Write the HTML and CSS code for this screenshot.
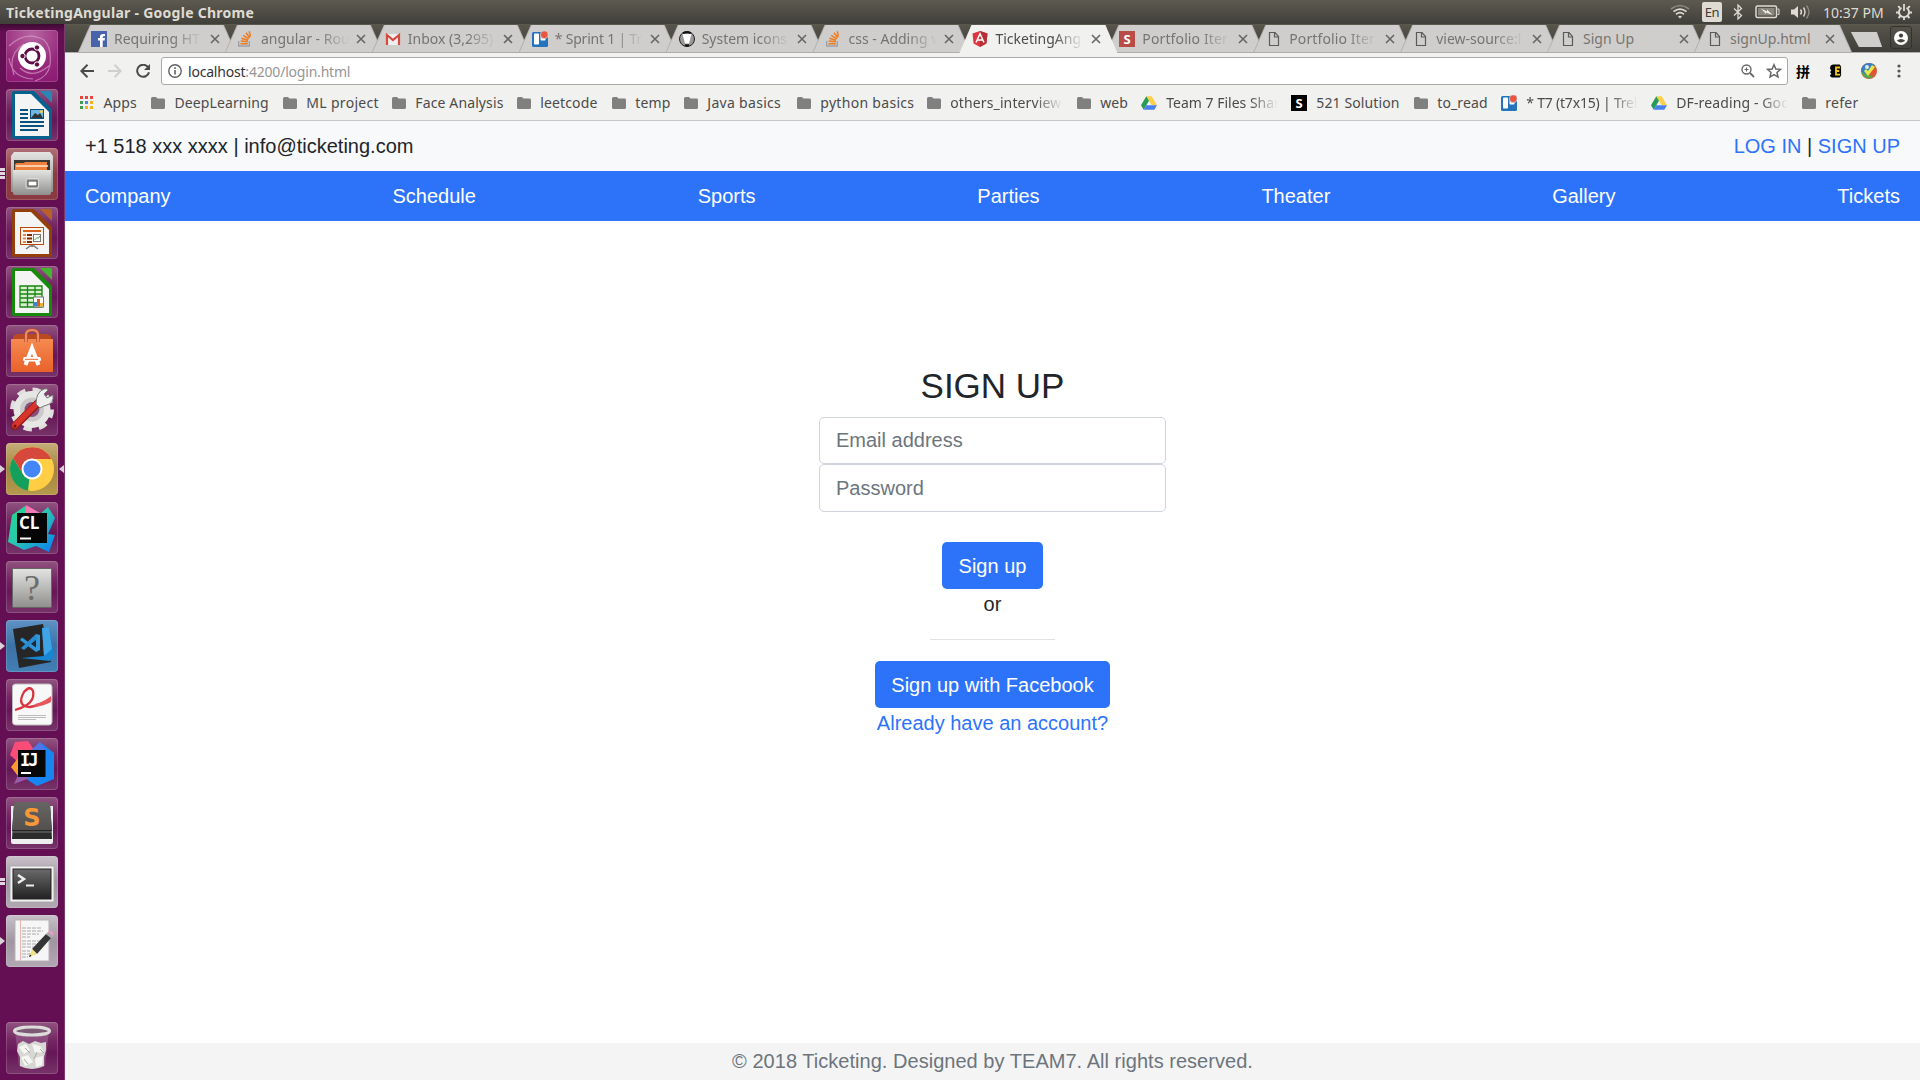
FILE: index.html
```html
<!DOCTYPE html>
<html lang="en">
<head>
<meta charset="utf-8">
<title>TicketingAngular</title>
<link rel="stylesheet" href="styles.css">
</head>
<body>
<svg class="defs" width="0" height="0">
  <defs>
    <linearGradient id="silver" x2="0" y2="1"><stop stop-color="#e4e4e2"/><stop offset="1" stop-color="#8f8f8d"/></linearGradient>
    <linearGradient id="orange" x2="0" y2="1"><stop stop-color="#f58a50"/><stop offset="1" stop-color="#e8622a"/></linearGradient>
    <linearGradient id="dark" x2="0" y2="1"><stop stop-color="#6a6a6a"/><stop offset="1" stop-color="#222"/></linearGradient>
    <linearGradient id="teal" x2="1" y2="1"><stop stop-color="#21d789"/><stop offset=".45" stop-color="#2bc6ae"/><stop offset="1" stop-color="#087cfa"/></linearGradient>
    <symbol id="folder" viewBox="0 0 14 12"><path d="M0 1.5Q0 0 1.5 0H5L6.5 1.6H12.5Q14 1.6 14 3V10.5Q14 12 12.5 12H1.5Q0 12 0 10.5Z" fill="#808080"/></symbol>
    <symbol id="page" viewBox="0 0 16 16"><path d="M3.5 1.5H9L12.500 5.500V14.500H3.500Z" fill="none" stroke="#5a5a5a" stroke-width="1.200"/><path d="M8.500 1.500V6H12.500" fill="none" stroke="#5a5a5a" stroke-width="1.200"/></symbol>
    <symbol id="stack" viewBox="0 0 16 16"><path d="M.7 10V15H11.300V10" fill="none" stroke="#9aa0a6" stroke-width="1.300"/><path d="M2.500 12.700H9.800M2.700 10L9.800 10.800M3.400 7.200L10 9.300M5.200 4.300L10.800 7.800M8 1.800L11.800 6.700M11.200 .2L12.500 5.500" stroke="#ef7a1c" stroke-width="1.500"/></symbol>
    <symbol id="trello" viewBox="0 0 16 16"><rect y="1" width="16" height="15" rx="1.500" fill="#2374bd"/><rect x="2" y="2.500" width="5" height="11" rx=".8" fill="#fff"/><rect x="8.500" y="2.500" width="5" height="7" rx=".8" fill="#fff"/><circle cx="12.300" cy="3.700" r="3.900" fill="#e8563f" stroke="#d5cdc8" stroke-width=".8"/></symbol>
    <symbol id="drive" viewBox="0 0 16 16"><path d="M5.300 1.300H10.700L16 10.200H10.600Z" fill="#ffcf48"/><path d="M5.300 1.300L8 5.800L2.700 14.700L0 10.200Z" fill="#2a9b57"/><path d="M5.300 10.200H16L13.300 14.700H2.700Z" fill="#4a80ee"/></symbol>
    <symbol id="angular" viewBox="0 0 16 16"><path d="M8 0L15.500 2.600L14.400 12.400L8 16L1.600 12.400L.5 2.600Z" fill="#dd3540"/><path d="M8 0L15.500 2.600L14.400 12.400L8 16Z" fill="#b52e38"/><path d="M4 11.500L8 2.800L12 11.500M5.500 9H10.500" fill="none" stroke="#fff" stroke-width="1.500"/></symbol>
    <symbol id="close" viewBox="0 0 10 10"><path d="M1 1L9 9M9 1L1 9" stroke="#666" stroke-width="1.600"/></symbol>
  </defs>
</svg>

<header class="panel">
  <span class="panel-title">TicketingAngular - Google Chrome</span>
  <div class="indicators">
    <svg class="i-wifi" width="20" height="16" viewBox="0 0 20 16" fill="none" stroke-width="1.600"><path d="M1 5Q10-2 19 5" stroke="#8c897f"/><path d="M3.500 7.700Q10 2.500 16.500 7.700M6 10.300Q10 7 14 10.300" stroke="#dfdbd2"/><path d="M8 12.500Q10 11 12 12.500L10 14.500Z" fill="#dfdbd2" stroke="none"/></svg>
    <span class="lang">En</span>
    <svg class="i-bt" width="10" height="16" viewBox="0 0 10 16" fill="none" stroke="#dfdbd2" stroke-width="1.300"><path d="M1 4.500L8.500 11.500L5 15V1L8.500 4.500L1 11.500"/></svg>
    <svg class="i-bat" width="25" height="14" viewBox="0 0 25 14"><rect x="1" y="1" width="20.500" height="11.500" rx="1.500" fill="none" stroke="#dfdbd2" stroke-width="1.500"/><rect x="3" y="3" width="16.500" height="7.500" fill="#8a877f"/><path d="M22.500 4H24V9.500H22.500" stroke="#dfdbd2" fill="none"/><path d="M6 3.500L12 6.500V4.500L17.500 10L11 7.500V9Z" fill="#f1eee6"/></svg>
    <svg class="i-vol" width="20" height="14" viewBox="0 0 20 14" fill="none" stroke-width="1.400"><path d="M0 4.500H3L7 1V13L3 9.500H0Z" fill="#dfdbd2"/><path d="M9.500 4.500Q11.500 7 9.500 9.500M12.500 2.500Q15.500 7 12.500 11.500" stroke="#dfdbd2"/><path d="M15.500.5Q20.500 7 15.500 13.500" stroke="#8c897f"/></svg>
    <span class="clock">10:37 PM</span>
    <svg class="i-gear" width="16" height="16" viewBox="0 0 16 16" fill="none" stroke="#dfdbd2"><path d="M5.500 3.800A5 5 0 1 0 10.500 3.800" stroke-width="1.900"/><path d="M8 0V7" stroke-width="1.800"/><path d="M2.200 2.200L4 4M13.800 2.200L12 4M0 8.500H3M13 8.500H16M2.500 14L4.500 12M13.500 14L11.500 12M8 13.500V16" stroke-width="1.900"/></svg>
  </div>
</header>

<div class="desktop">
<aside class="launcher">
  <div class="tile ubuntu"><svg viewBox="0 0 52 52"><path d="M3 16Q20 0 38 10Q46 18 44 35Q42 47 29 51M8 45Q1 24 18 14M14 38Q27 50 44 35M3 28Q6 48 27 49" fill="none" stroke="#d59bc4" stroke-width="1.200" opacity=".7"/><circle cx="26" cy="26" r="14" fill="#fff"/><circle cx="26" cy="26" r="7" fill="none" stroke="#5e0d49" stroke-width="2.800"/><g fill="#5e0d49" stroke="#fff" stroke-width="1"><circle cx="16.500" cy="26" r="2.700"/><circle cx="31" cy="17.500" r="2.700"/><circle cx="31" cy="34.500" r="2.700"/></g></svg></div>

  <div class="tile"><svg viewBox="0 0 52 52"><path d="M8 2H28L46 20V48Q46 50 44 50H8Q6 50 6 48V4Q6 2 8 2Z" fill="#07618f"/><path d="M9 5H25L43 23V47H9Z" fill="#f4f4f4"/><path d="M34 2H44Q46 2 46 4V14Z" fill="#2a86b5"/><path d="M14 21H22M14 25H22M14 29H22M14 33H38M14 37H38M14 41H32" stroke="#07527e" stroke-width="2"/><rect x="24.500" y="20.500" width="13" height="9" fill="#6fb7df" stroke="#07527e"/><path d="M25 29L29 24L32 26L34 24L37 29Z" fill="#2e3436"/><circle cx="35.500" cy="22.500" r="1.500" fill="#f5d23c"/></svg></div>

  <div class="tile files"><i class="dots"></i><svg viewBox="0 0 52 52"><path d="M8 4H44L47 8V44H5V8Z" fill="url(#silver)"/><rect x="8" y="12" width="36" height="10" fill="#3b3732"/><path d="M9 16L11 15H18L19 14H41V22H9Z" fill="#ef7f3c"/><path d="M10 18H42" stroke="#ffe9cf" stroke-width="1.500"/><path d="M7 22H45V45Q45 47 43 47H9Q7 47 7 45Z" fill="url(#silver)"/><rect x="20" y="30.500" width="12.500" height="10" rx="1.500" fill="#aaa" stroke="#d9d9d9"/><rect x="22" y="33" width="9" height="5" fill="#fff" stroke="#444"/></svg></div>

  <div class="tile"><svg viewBox="0 0 52 52"><path d="M8 2H28L46 20V48Q46 50 44 50H8Q6 50 6 48V4Q6 2 8 2Z" fill="#933f0b"/><path d="M9 5H25L43 23V47H9Z" fill="#f4f4f4"/><path d="M34 2H44Q46 2 46 4V14Z" fill="#b8602a"/><rect x="14.500" y="20.500" width="23" height="17" fill="#fff5ee" stroke="#b9490f"/><path d="M17 24H35" stroke="#d4641c" stroke-width="2"/><path d="M17 28H20M17 31.500H20M17 35H20" stroke="#e08b4b" stroke-width="2"/><path d="M21 28H26M21 31.500H26M21 35H26" stroke="#7c2d06" stroke-width="2"/><rect x="27.500" y="27.500" width="7" height="7" fill="#fff" stroke="#777"/><path d="M28.500 33L31 30.500L32 31.500L34 29" stroke="#3a3" fill="none"/><path d="M26 38V40M20 42L24 39H28L32 42" fill="none" stroke="#777" stroke-width="1.500"/></svg></div>

  <div class="tile"><svg viewBox="0 0 52 52"><path d="M8 2H28L46 20V48Q46 50 44 50H8Q6 50 6 48V4Q6 2 8 2Z" fill="#188a0b"/><path d="M9 5H25L43 23V47H9Z" fill="#f4f4f4"/><path d="M34 2H44Q46 2 46 4V14Z" fill="#43b52e"/><path d="M14 20H36V41H14ZM14 24H36M14 28H36M14 32H36M14 36.500H36M21.500 20V41M29 20V41" fill="#d9f0d3" stroke="#18850e" stroke-width="1.300"/><rect x="27.500" y="31" width="10" height="10" fill="#fff" stroke="#777"/><path d="M28 36H31V40.500H28Z" fill="#3b86c8"/><path d="M31 33H34V40.500H31Z" fill="#df5a1b"/><path d="M34 37H37V40.500H34Z" fill="#e9b52d"/></svg></div>

  <div class="tile"><svg viewBox="0 0 52 52"><path d="M7 11L11 9H41L45 11V14H7Z" fill="#b94a20"/><path d="M5 14H47V47H5Z" fill="url(#orange)"/><path d="M20 17V10Q20 5 26 5Q32 5 32 10V17" fill="none" stroke="#b9532f" stroke-width="3.500"/><path d="M20 17V10Q20 5 26 5Q32 5 32 10V17" fill="none" stroke="#ec8b66" stroke-width="2"/><path d="M19.500 40L26 23L32.500 40" fill="none" stroke="#fff" stroke-width="4"/><rect x="17" y="32" width="18" height="4.500" rx="2" fill="#fff"/><path d="M19 34.300H32" stroke="#e76a32" stroke-width="1"/></svg></div>

  <div class="tile"><svg viewBox="0 0 52 52"><circle cx="26" cy="25.500" r="19.500" fill="none" stroke="#dededc" stroke-width="5" stroke-dasharray="8.200 7.110"/><circle cx="26" cy="25.500" r="13.500" fill="none" stroke="#e6e6e4" stroke-width="10"/><circle cx="26" cy="25.500" r="12" fill="#cbc9ca"/><circle cx="26" cy="25.500" r="7.500" fill="#87517d"/><path d="M9 42L32 19" stroke="#8f1b16" stroke-width="8" stroke-linecap="round"/><path d="M9 41.500L31 19.500" stroke="#d8342c" stroke-width="6" stroke-linecap="round"/><path d="M30 20Q30 8 38 5Q42 4 42 6L38 10L41 14L47 11Q48 19 41 21Q37 22 34 24Z" fill="#eee" stroke="#777" stroke-width="1"/><circle cx="9" cy="42" r="1.500" fill="#6d1610"/></svg></div>

  <div class="tile chrome"><i class="arrow"></i><i class="arrow-right"></i><svg viewBox="0 0 52 52"><circle cx="26" cy="26" r="22" fill="#ffce44"/><path d="M7 15L17 31L26 36L24 48A22 22 0 0 1 7 15Z" fill="#14a05a"/><path d="M26 48L35 31H24L22 47.500Z" fill="#ffce44"/><path d="M17 31L7 15A22 22 0 0 1 45.500 16H26Z" fill="#d6483c"/><circle cx="26" cy="26" r="10.500" fill="#fff"/><circle cx="26" cy="26" r="8.500" fill="#4486f5"/></svg></div>

  <div class="tile"><svg viewBox="0 0 52 52"><path d="M2 40L6 13L19 4L34 12L42 5L49 16L42 32L49 33L43 50L30 44L18 48Z" fill="url(#teal)"/><path d="M20 3L34 11L32 15H19Z" fill="#f779b4"/><rect x="11" y="11" width="30" height="30" fill="#050505"/><text x="13" y="27" class="brand">CL</text><path d="M14 36.500H25" stroke="#fff" stroke-width="2"/></svg></div>

  <div class="tile"><svg viewBox="0 0 52 52"><rect x="6.500" y="7.500" width="39" height="39" rx="1" fill="url(#silver)" stroke="#666"/><text x="26" y="39" text-anchor="middle" class="question">?</text></svg></div>

  <div class="tile vscode"><i class="arrow"></i><svg viewBox="0 0 52 52"><path d="M7 9L37 4L45 42L13 48Z" fill="#262626"/><path d="M36 8L43 7L48 36L44 41L15 38L38 36Z" fill="#1685d2"/><path d="M36 8L43 7L46 29L38 36Z" fill="#3fa4e6"/><path d="M30 14L34 15V30L30 32L14 20L16 17.500L30 27.500Z" fill="#3097dc"/><path d="M30 14L31 19L18 30L15 28Z" fill="#2a8cd0"/></svg></div>

  <div class="tile"><svg viewBox="0 0 52 52"><rect x="6.500" y="5" width="39.500" height="41" rx="3" fill="#f8f8f8" stroke="#bbb"/><path d="M9 31Q30 25 27 12Q24 6 18 13Q10 27 24 28Q36 26 45 19" fill="none" stroke="#d9363e" stroke-width="2.300"/><path d="M29 25Q38 23 45 17V23Q38 27 28 28Z" fill="#e6575e"/><path d="M12 36.500H40M12 38.500H40M12 40.500H30" stroke="#bcbcbc"/></svg></div>

  <div class="tile"><svg viewBox="0 0 52 52"><path d="M9 4L22 3L29 13L12 24L4 17Z" fill="#fb4b77"/><path d="M5 29L12 20V38Z" fill="#fc9b2c"/><path d="M34 4L48 15V41L31 48L17 39Z" fill="#1786f3"/><path d="M34 4L40 13L34 20L25 12Z" fill="#5274e9"/><path d="M8 46L12 37L24 40Z" fill="#9a5ba8"/><rect x="12" y="12" width="27.500" height="27" fill="#080808"/><text x="14" y="28" class="ij">IJ</text><path d="M15 35H25" stroke="#fff" stroke-width="2"/></svg></div>

  <div class="tile"><svg viewBox="0 0 52 52"><path d="M5 9H47V45Q47 47 45 47H7Q5 47 5 45Z" fill="#eee"/><path d="M8 8Q8 5 10 5H42Q44 5 44 8L46 42H6Z" fill="#2c2c2c"/><path d="M8 8Q8 5 10 5H42Q44 5 44 8L46 34H6Z" fill="url(#dark)"/><path d="M8 8Q8 5 10 5H42Q44 5 44 8L46 33H6Z" fill="#666462" opacity=".7"/><path d="M6 35H46" stroke="#777"/><text x="26" y="29" text-anchor="middle" class="sublime">S</text></svg></div>

  <div class="tile silver"><i class="dashes"></i><svg viewBox="0 0 52 52"><rect x="4" y="10" width="44" height="36" fill="#f2f2f2" stroke="#aaa"/><rect x="7" y="13" width="38" height="30" fill="url(#dark)" stroke="#222"/><path d="M12 19L18 23L12 27" fill="none" stroke="#eee" stroke-width="2.500"/><path d="M20 29.500H28" stroke="#eee" stroke-width="2"/></svg></div>

  <div class="tile silver"><i class="arrow"></i><svg viewBox="0 0 52 52"><path d="M9 5H43V46H9Z" fill="#f6f6f6" stroke="#b5b5b5"/><path d="M14.500 5V46" stroke="#f1b2b2"/><path d="M16 13H35M16 16H37M16 19H33M16 22H24M16 26H34M16 29H33M16 32H30M16 36H24M16 39H30M16 42H22" stroke="#aaa" stroke-dasharray="4 1"/><path d="M26 34L40 19L45 23L31 39Z" fill="#353535"/><path d="M40 19L42 17L47 21L45 23Z" fill="#aaa"/><path d="M42 17Q44 15 47 17Q48 19 47 21Z" fill="#e79bc4"/><path d="M26 34L31 39L23 42Z" fill="#efe289"/><path d="M24 39.500L25.500 41L23 42Z" fill="#111"/></svg></div>

  <div class="tile trash"><svg viewBox="0 0 52 52"><path d="M9 9L13 44Q26 50 39 44L43 9Z" fill="#a878a0" opacity=".45"/><path d="M12 22L17 19L23 22L29 19L35 21L40 20V28L38 35V44Q26 50 14 44V35L11 29Z" fill="#d7d7d3"/><path d="M13 25L20 22L24 28L18 32ZM26 22L34 24L38 30L29 31ZM15 35L22 33L27 40L19 44ZM29 36L37 34L36 43L30 45Z" fill="#f5f5f2"/><path d="M19 26L24 31M31 30L28 37M18 37L22 42M34 27L38 31" stroke="#aaa9a3"/><ellipse cx="26" cy="9" rx="17.500" ry="4" fill="#7e5976" stroke="#dcdcdb" stroke-width="3"/></svg></div>
</aside>

<main class="browser">
  <div class="tabstrip">
    <div class="tab"><svg class="fav"><rect width="16" height="16" fill="#4862ab"/><path d="M9 16V9.500H7V7H9V5.500Q9 3 12 3H14V5.300H12.700Q11.700 5.300 11.700 6.300V7H14L13.600 9.500H11.700V16Z" fill="#fff"/></svg><span class="tab-title">Requiring HTM</span><svg class="x"><use href="#close"/></svg></div>
    <div class="tab"><svg class="fav"><use href="#stack"/></svg><span class="tab-title">angular - Rout</span><svg class="x"><use href="#close"/></svg></div>
    <div class="tab"><svg class="fav"><rect x="1" y="3" width="14" height="11" fill="#eee"/><path d="M2 14V4L8 9L14 4V14" fill="none" stroke="#d54b3d" stroke-width="2.200"/></svg><span class="tab-title">Inbox (3,295)</span><svg class="x"><use href="#close"/></svg></div>
    <div class="tab"><svg class="fav"><use href="#trello"/></svg><span class="tab-title tight">* Sprint 1 | Trel</span><svg class="x"><use href="#close"/></svg></div>
    <div class="tab"><svg class="fav"><circle cx="8" cy="8" r="7.500" fill="#999" stroke="#222"/><path d="M3.500 3H12.500L10 12.500H6Z" fill="#fff"/><path d="M4 2.200Q8 .5 12 2.200" fill="none" stroke="#111" stroke-width="2"/><path d="M6 14Q8 14.800 10 14" fill="none" stroke="#111" stroke-width="2"/></svg><span class="tab-title">System icons -</span><svg class="x"><use href="#close"/></svg></div>
    <div class="tab"><svg class="fav"><use href="#stack"/></svg><span class="tab-title">css - Adding v</span><svg class="x"><use href="#close"/></svg></div>
    <div class="tab active"><svg class="fav"><use href="#angular"/></svg><span class="tab-title">TicketingAngu</span><svg class="x"><use href="#close"/></svg></div>
    <div class="tab"><svg class="fav"><rect width="16" height="16" fill="#b84d47"/><text x="8" y="13" text-anchor="middle" class="s-mark">S</text></svg><span class="tab-title wide">Portfolio Iter</span><svg class="x"><use href="#close"/></svg></div>
    <div class="tab"><svg class="fav"><use href="#page"/></svg><span class="tab-title wide">Portfolio Iter</span><svg class="x"><use href="#close"/></svg></div>
    <div class="tab"><svg class="fav"><use href="#page"/></svg><span class="tab-title">view-source:l</span><svg class="x"><use href="#close"/></svg></div>
    <div class="tab"><svg class="fav"><use href="#page"/></svg><span class="tab-title whole">Sign Up</span><svg class="x"><use href="#close"/></svg></div>
    <div class="tab"><svg class="fav"><use href="#page"/></svg><span class="tab-title whole">signUp.html</span><svg class="x"><use href="#close"/></svg></div>
    <div class="newtab"></div>
    <div class="profile"><svg width="14" height="14" viewBox="0 0 14 14"><circle cx="7" cy="7" r="7" fill="#fff"/><circle cx="7" cy="4.600" r="2.100" fill="#45443f"/><path d="M2.800 9.500Q7 6.500 11.200 9.500Q7 13.500 2.800 9.500Z" fill="#45443f"/></svg></div>
  </div>

  <div class="toolbar">
    <svg class="nav-btn" width="14" height="14" viewBox="0 0 14 14"><path d="M14 7H1.500M7.500 .8L1.300 7L7.500 13.200" fill="none" stroke="#4a4a4a" stroke-width="2"/></svg>
    <svg class="nav-btn" width="14" height="14" viewBox="0 0 14 14"><path d="M0 7H12.500M6.500 .8L12.700 7L6.500 13.200" fill="none" stroke="#cfcfce" stroke-width="2"/></svg>
    <svg class="nav-btn" width="14" height="14" viewBox="0 0 14 14"><path d="M12 3.200A6 6 0 1 0 13 8.200" fill="none" stroke="#4a4a4a" stroke-width="2"/><path d="M14 0V6H8Z" fill="#4a4a4a"/></svg>
    <div class="omnibox">
      <svg width="14" height="14" viewBox="0 0 14 14"><circle cx="7" cy="7" r="6.200" fill="none" stroke="#606060" stroke-width="1.400"/><path d="M7 6V10.500M7 3.200V4.900" stroke="#606060" stroke-width="1.600"/></svg>
      <span class="url"><b>localhost</b>:4200/login.html</span>
      <svg width="14" height="14" viewBox="0 0 14 14" fill="none" stroke="#666"><circle cx="5.500" cy="5.500" r="4.500" stroke-width="1.400"/><path d="M9 9L13 13" stroke-width="1.800"/><path d="M3.500 5.500H7.500M5.500 3.500V7.500"/></svg>
      <svg class="star" width="14" height="14" viewBox="0 0 14 14"><path d="M7 1.500L8.600 5.300L12.700 5.600L9.600 8.300L10.500 12.300L7 10.200L3.500 12.300L4.400 8.300L1.300 5.600L5.400 5.300Z" fill="none" stroke="#666" stroke-width="1.300"/></svg>
    </div>
    <div class="extensions">
      <span class="pinyin">拼</span>
      <svg width="12" height="14" viewBox="0 0 13 14"><path d="M4 0H10.500L12 2V12L10.500 14H4Q0 14 0 11.500L1.500 10L0 8L1.500 6.500L0 4.500Q0 0 4 0Z" fill="#050505"/><path d="M11 3.200H6.500V11H11M6.500 7H10" fill="none" stroke="#f5c518" stroke-width="2"/></svg>
      <svg width="16" height="16" viewBox="0 0 16 16"><circle cx="8" cy="8" r="8" fill="#dd5631"/><path d="M8 0A8 8 0 0 0 0 8L5 15Q8 8 14 2Q11 0 8 0Z" fill="#3b7ec0"/><path d="M1 9Q0 13 8 16L13 13Q5 12 1 9Z" fill="#57a750"/><path d="M3 8L7 13L14 4L11 2L7 8L5 6Z" fill="#e3e94c"/><circle cx="6" cy="4" r="2" fill="#dceaf6"/></svg>
      <svg width="4" height="14" viewBox="0 0 4 14" fill="#555"><circle cx="2" cy="2" r="1.600"/><circle cx="2" cy="7" r="1.600"/><circle cx="2" cy="12" r="1.600"/></svg>
    </div>
  </div>

  <div class="bookmarks">
    <a class="bm apps"><svg width="14" height="14" viewBox="0 0 14 14"><path d="M0 0h3v3H0zM5 0h3v3H5zM10 0h3v3h-3z" fill="#e8453c"/><path d="M0 5h3v3H0zM0 10h3v3H0z" fill="#3f9c55"/><path d="M5 5h3v3H5z" fill="#4b86ef"/><path d="M10 5h3v3h-3zM5 10h3v3H5zM10 10h3v3h-3z" fill="#f3b51b"/></svg><span class="w34 wide">Apps</span></a>
    <a class="bm"><svg class="folder"><use href="#folder"/></svg><span class="w95 wide">DeepLearning</span></a>
    <a class="bm"><svg class="folder"><use href="#folder"/></svg><span class="w72 wider">ML project</span></a>
    <a class="bm"><svg class="folder"><use href="#folder"/></svg><span class="w88 wide">Face Analysis</span></a>
    <a class="bm"><svg class="folder"><use href="#folder"/></svg><span class="w58 wide">leetcode</span></a>
    <a class="bm"><svg class="folder"><use href="#folder"/></svg><span class="w35 wide">temp</span></a>
    <a class="bm"><svg class="folder"><use href="#folder"/></svg><span class="w76 wider">Java basics</span></a>
    <a class="bm"><svg class="folder"><use href="#folder"/></svg><span class="w93 wider">python basics</span></a>
    <a class="bm"><svg class="folder"><use href="#folder"/></svg><span class="w113 fade wide">others_interview</span></a>
    <a class="bm"><svg class="folder"><use href="#folder"/></svg><span class="w28">web</span></a>
    <a class="bm"><svg class="site"><use href="#drive"/></svg><span class="w112 fade">Team 7 Files Shar</span></a>
    <a class="bm"><svg class="site"><rect width="16" height="16" fill="#000"/><text x="8" y="12.500" text-anchor="middle" class="s-mark">S</text></svg><span class="w84 wide">521 Solution</span></a>
    <a class="bm"><svg class="folder"><use href="#folder"/></svg><span class="w51 wide">to_read</span></a>
    <a class="bm"><svg class="site"><use href="#trello"/></svg><span class="w112 fade tight">* T7 (t7x15) | Trel</span></a>
    <a class="bm"><svg class="site"><use href="#drive"/></svg><span class="w112 fade wide">DF-reading - Goo</span></a>
    <a class="bm"><svg class="folder"><use href="#folder"/></svg><span class="wider">refer</span></a>
  </div>

  <section class="page">
    <div class="contact"><span>+1 518 xxx xxxx | info@ticketing.com</span><span><a>LOG IN</a> | <a>SIGN UP</a></span></div>
    <nav class="site-nav"><a>Company</a><a>Schedule</a><a>Sports</a><a>Parties</a><a>Theater</a><a>Gallery</a><a>Tickets</a></nav>
    <form class="signup">
      <h2>SIGN UP</h2>
      <input type="email" placeholder="Email address">
      <input class="password" type="password" placeholder="Password">
      <button class="btn submit" type="button">Sign up</button>
      <span>or</span>
      <hr>
      <button class="btn facebook" type="button">Sign up with Facebook</button>
      <a>Already have an account?</a>
    </form>
    <footer class="site-footer">© 2018 Ticketing. Designed by TEAM7. All rights reserved.</footer>
  </section>
</main>
</div>
</body>
</html>
```
FILE: styles.css
```css
* { box-sizing: border-box; }
body {
  margin: 0;
  width: 1920px;
  height: 1080px;
  overflow: hidden;
  display: flex;
  flex-direction: column;
  font-family: "Noto Sans", "Open Sans", sans-serif;
  font-size: 14px;
}
svg { display: block; flex: none; }
.defs { position: absolute; }

/* top panel */
.panel {
  flex: none;
  height: 24px;
  display: flex;
  align-items: center;
  justify-content: space-between;
  padding: 0 8px 0 6px;
  background: linear-gradient(#5d594d, #5a574e 10%, #403f3a);
  color: #dfdbd2;
}
.panel-title { font-weight: 700; font-size: 14px; letter-spacing: .27px; white-space: nowrap; }
.indicators { display: flex; align-items: center; }
.i-wifi { margin-right: 12px; }
.lang {
  width: 20px;
  height: 20px;
  line-height: 21px;
  margin-right: 11px;
  border-radius: 2px;
  background: #dfdbd2;
  color: #3c3b37;
  text-align: center;
  font-size: 13px;
  letter-spacing: -.5px;
}
.i-bt { margin-right: 12px; }
.i-bat { margin-right: 11px; }
.i-vol { margin-right: 12px; }
.clock { width: 61px; margin-right: 12px; white-space: nowrap; }

.desktop { flex: 1; display: flex; min-height: 0; }

/* launcher */
.launcher {
  flex: none;
  width: 65px;
  padding: 6px 0 6px 6px;
  display: flex;
  flex-direction: column;
  gap: 7px;
  background: linear-gradient(#3d0a31, #640f53 8px, #640f53);
  border-right: 1px solid #7b3a6d;
}
.tile {
  position: relative;
  flex: none;
  width: 52px;
  height: 52px;
  border-radius: 4px;
  background: linear-gradient(#915480, #742763 35%, #661657 60%, #773469);
  box-shadow: inset 0 0 0 1px rgba(255, 255, 255, .16);
}
.tile svg { width: 52px; height: 52px; }
.ubuntu { background: radial-gradient(circle at 50% 10%, #b866a2, #96297c 60%, #8b1772); }
.files { background: linear-gradient(#b07076, #8c3a43 50%, #8b3a42); }
.chrome { background: linear-gradient(#c6ae78, #a58440 50%, #b59a4e); }
.vscode { background: linear-gradient(#5f93c4, #3c71a6 50%, #447fb5); }
.silver { background: linear-gradient(#c9c0c8, #a295a2 50%, #b2a8b2); }
.trash { margin-top: auto; }
.brand { font: 700 17px "Open Sans", sans-serif; fill: #fff; }
.ij { font: 700 17px "DejaVu Sans Mono", monospace; fill: #fff; letter-spacing: -2px; }
.question { font: 36px "Liberation Serif", serif; fill: #6d6d6d; }
.sublime { font: 700 24px "DejaVu Sans", sans-serif; fill: #f79838; }
.s-mark { font: 700 13px "Open Sans", sans-serif; fill: #fff; }
.arrow, .arrow-right {
  position: absolute;
  top: 22px;
  border: solid transparent;
  border-width: 4px 0 4px 5px;
  border-left-color: #d9d2d8;
  left: -6px;
}
.arrow-right {
  left: auto;
  right: -6px;
  border-width: 4px 5px 4px 0;
  border-right-color: #d9d2d8;
}
.dots, .dashes {
  position: absolute;
  left: -6px;
  top: 20px;
  width: 5px;
  height: 11px;
  background: repeating-linear-gradient(#e0d8de 0 3px, transparent 3px 4px);
}
.dashes { top: 22px; height: 7px; }

/* browser frame */
.browser { flex: 1; min-width: 0; display: flex; flex-direction: column; background: #f1f1ef; }
.tabstrip {
  position: relative;
  z-index: 0;
  flex: none;
  height: 29px;
  padding: 1px 8px 0 13px;
  display: flex;
  background: linear-gradient(#5d5b4e, #55534a 2px, #403f3a);
  border-bottom: 1px solid #aeadab;
}
.tab {
  position: relative;
  flex: none;
  width: 158px;
  height: 27px;
  margin-right: -11.100px;
  padding: 0 12px 0 13px;
  display: flex;
  align-items: center;
  color: #757472;
}
.tab::before, .tab::after {
  content: "";
  position: absolute;
  inset: 0;
  z-index: -1;
  background: #b1b0ae;
  clip-path: polygon(0 100%, 12px 0, 146px 0, 100% 100%);
}
.tab::after {
  background: #d0cecc;
  clip-path: polygon(1px 100%, 13px 0, 145px 0, calc(100% - 1px) 100%);
}
.tab.active { height: 28px; margin-bottom: -1px; padding-bottom: 1px; color: #4c4c4c; }
.tab.active::before, .tab.active::after { z-index: 0; background: #f1f1ef; }
.tab.active > * { position: relative; z-index: 1; }
.fav { width: 16px; height: 16px; margin-right: 7px; }
.tab-title {
  flex: none;
  width: 90px;
  overflow: hidden;
  white-space: nowrap;
  -webkit-mask-image: linear-gradient(90deg, #000 65%, transparent 98%);
  mask-image: linear-gradient(90deg, #000 65%, transparent 98%);
}
.tab-title.whole { -webkit-mask-image: none; mask-image: none; }
.x { width: 10px; height: 10px; margin-left: 5.500px; }
.newtab {
  width: 33px;
  height: 15px;
  margin: 7px 8px 0 10px;
  background: #d0cecc;
  clip-path: polygon(0 0, 26px 0, 100% 100%, 8px 100%);
}
.profile {
  width: 23px;
  height: 23px;
  margin: 1px 0 0 auto;
  display: grid;
  place-items: center;
  border: 1px solid #33322e;
  border-radius: 3px;
}
.toolbar {
  flex: none;
  height: 36px;
  padding: 4px 19px 4px 15px;
  display: flex;
  align-items: center;
}
.nav-btn { margin-right: 14px; }
.omnibox {
  flex: none;
  width: 1627px;
  height: 28px;
  margin-left: -3px;
  padding: 0 5px 0 6px;
  display: flex;
  align-items: center;
  background: #fff;
  border: 1px solid #aaa9a7;
  border-radius: 3px;
}
.url { flex: 1; margin-left: 6px; color: #969696; letter-spacing: -.2px; }
.url b { font-weight: 400; color: #333; }
.star { margin-left: 11px; width: 16px; height: 16px; }
.extensions { flex: 1; display: flex; align-items: center; justify-content: space-between; padding-left: 8px; }
.pinyin { font: 700 14px "Noto Sans CJK SC", sans-serif; color: #000; }
.bookmarks {
  flex: none;
  height: 32px;
  padding: 0 0 4px 15px;
  display: flex;
  align-items: center;
  gap: 13.600px;
  border-bottom: 1px solid #c6c5c4;
  color: #4b4b4b;
}
.bm { flex: none; display: flex; align-items: center; gap: 9.400px; white-space: nowrap; }
.folder { width: 14px; height: 12px; }
.site { width: 16px; height: 16px; margin: 0 -.4px 0 -.6px; }
.wide { letter-spacing: .12px; }
.wider { letter-spacing: .3px; }
.tight { letter-spacing: -.2px; }
.w28 { width: 28px; } .w34 { width: 34px; } .w35 { width: 35px; } .w51 { width: 51px; }
.w58 { width: 58px; } .w72 { width: 72px; } .w76 { width: 76px; } .w84 { width: 84px; }
.w88 { width: 88px; } .w93 { width: 93px; } .w95 { width: 95px; }
.w112 { width: 112px; } .w113 { width: 113px; }
.fade {
  overflow: hidden;
  -webkit-mask-image: linear-gradient(90deg, #000 75%, transparent);
  mask-image: linear-gradient(90deg, #000 75%, transparent);
}

/* ticketing site */
.page {
  flex: 1;
  display: flex;
  flex-direction: column;
  background: #fff;
  color: #212529;
  font: 20px/30px "Liberation Sans", Arial, sans-serif;
}
.page a { color: #2c73fa; }
.contact, .site-nav {
  flex: none;
  height: 50px;
  padding: 10px 20px;
  display: flex;
  justify-content: space-between;
  background: #f8f9fb;
}
.site-nav { background: #2c73fa; }
.page .site-nav a { color: #fff; }
.signup {
  flex: 1;
  padding-top: 144px;
  display: flex;
  flex-direction: column;
  align-items: center;
}
.signup h2 { margin: 0 0 10px; font-size: 35px; line-height: 42px; font-weight: 400; }
.signup input {
  width: 347px;
  height: 47px;
  padding: 0 16px;
  border: 1px solid #ced4da;
  border-radius: 5px;
  font: inherit;
}
.signup .password { height: 48px; }
.signup input::placeholder { color: #6c757d; opacity: 1; }
.btn {
  height: 47px;
  padding: 0 17px;
  border: 0;
  border-radius: 5px;
  background: #2c73fa;
  color: #fff;
  font: inherit;
}
.submit { margin-top: 30px; }
.facebook { padding: 0 16px; }
.signup hr { width: 125px; margin: 20px 0 21px; border: 0; border-top: 1px solid #e2e2e2; }
.site-footer {
  flex: none;
  height: 37px;
  line-height: 37px;
  text-align: center;
  letter-spacing: .03px;
  background: #f4f4f4;
  color: #6c757d;
}
```
